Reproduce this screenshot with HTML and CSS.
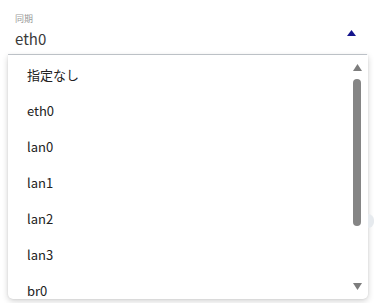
FILE: index.html
```html
<!DOCTYPE html>
<html lang="ja">
<head>
<meta charset="utf-8">
<link rel="stylesheet" href="styles.css">
</head>
<body>
<div class="page">
  <div class="field">
    <div class="label">同期</div>
    <div class="value-row">
      <span class="value">eth0</span>
      <svg class="caret" width="9" height="6" viewBox="0 0 9 6"><polygon points="4.5,0 9,6 0,6" fill="#14148c"/></svg>
    </div>
  </div>
  <div class="menu">
    <ul class="options">
      <li>指定なし</li>
      <li>eth0</li>
      <li>lan0</li>
      <li>lan1</li>
      <li>lan2</li>
      <li>lan3</li>
      <li>br0</li>
    </ul>
    <div class="scrollbar">
      <svg class="arrow" width="9" height="7" viewBox="0 0 9 7"><polygon points="4.5,0 9,7 0,7" fill="#7d7d7d"/></svg>
      <div class="track"><div class="thumb"></div></div>
      <svg class="arrow" width="9" height="7" viewBox="0 0 9 7"><polygon points="0,0 9,0 4.5,7" fill="#7d7d7d"/></svg>
    </div>
  </div>
  <div class="peek"></div>
</div>
</body>
</html>
```

FILE: styles.css
```css
html, body {
  margin: 0;
  padding: 0;
  background: #ffffff;
}
body {
  font-family: "Noto Sans CJK JP", "Noto Sans", sans-serif;
  color: #222;
  width: 383px;
  height: 303px;
  overflow: hidden;
}
.page {
  position: relative;
  padding: 0 0 0 8px;
}
.field {
  width: 359px;
  border-bottom: 1.5px solid #c9ced4;
  padding-top: 12px;
  height: 42px;
  box-sizing: content-box;
}
.label {
  padding-left: 7px;
  font-size: 9px;
  line-height: 13px;
  color: #9a9a9a;
}
.value-row {
  display: flex;
  justify-content: space-between;
  align-items: flex-start;
  padding-left: 7px;
  padding-right: 11px;
}
.value {
  font-size: 15px;
  line-height: 22px;
  margin-top: 3px;
  color: #3a3a3a;
}
.caret {
  margin-top: 5px;
}
.menu {
  display: flex;
  width: 360px;
  height: 244px;
  background: #fff;
  border-radius: 0 0 5px 5px;
  box-shadow: 0 2px 6px rgba(0,0,0,0.18), 0 0 2px rgba(0,0,0,0.10);
  overflow: hidden;
}
.options {
  flex: 1;
  list-style: none;
  margin: 0;
  padding: 2px 0 0 19px;
  overflow: hidden;
}
.options li {
  height: 36px;
  line-height: 36px;
  font-size: 13px;
  color: #222;
  white-space: nowrap;
}
.scrollbar {
  width: 16px;
  margin-right: 3px;
  display: flex;
  flex-direction: column;
  align-items: center;
  padding-top: 9px;
  padding-bottom: 9px;
  box-sizing: border-box;
}
.track {
  flex: 1;
  width: 8px;
  padding-top: 8px;
}
.thumb {
  width: 8px;
  height: 147px;
  border-radius: 4px;
  background: #858585;
}
.peek {
  position: absolute;
  left: 368px;
  top: 214px;
  width: 6px;
  height: 14px;
  border-radius: 0 7px 7px 0;
  background: #e6eaee;
}
```
